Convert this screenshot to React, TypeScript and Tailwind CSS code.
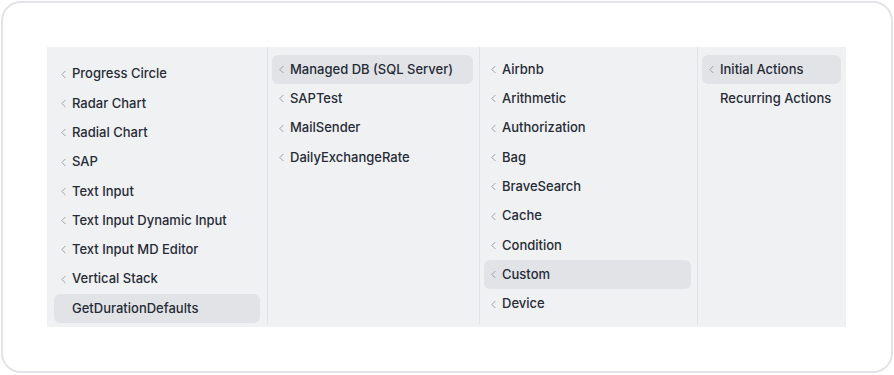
import { ChevronLeft } from "lucide-react";

type Item = { label: string; active?: boolean; chevron?: boolean };

const columns: { width: string; pad: string; items: Item[] }[] = [
  {
    width: "w-[221px]",
    pad: "pt-[12.5px] px-[7px]",
    items: [
      { label: "Progress Circle" },
      { label: "Radar Chart" },
      { label: "Radial Chart" },
      { label: "SAP" },
      { label: "Text Input" },
      { label: "Text Input Dynamic Input" },
      { label: "Text Input MD Editor" },
      { label: "Vertical Stack" },
      { label: "GetDurationDefaults", active: true, chevron: false },
    ],
  },
  {
    width: "w-[212px]",
    pad: "pt-[8px] pl-[4px] pr-[6px]",
    items: [
      { label: "Managed DB (SQL Server)", active: true },
      { label: "SAPTest" },
      { label: "MailSender" },
      { label: "DailyExchangeRate" },
    ],
  },
  {
    width: "w-[218px]",
    pad: "pt-[8px] pl-[4px] pr-[6px]",
    items: [
      { label: "Airbnb" },
      { label: "Arithmetic" },
      { label: "Authorization" },
      { label: "Bag" },
      { label: "BraveSearch" },
      { label: "Cache" },
      { label: "Condition" },
      { label: "Custom", active: true },
      { label: "Device" },
    ],
  },
  {
    width: "flex-1",
    pad: "pt-[8px] pl-[4px] pr-[5px]",
    items: [
      { label: "Initial Actions", active: true },
      { label: "Recurring Actions", chevron: false },
    ],
  },
];

function Row({ item }: { item: Item }) {
  const showChevron = item.chevron !== false;
  return (
    <div
      className={`flex h-[29.3px] items-center rounded-md pl-[3px] text-[13px] font-medium text-[#262b36] ${
        item.active ? "bg-[#e2e3e7]" : ""
      }`}
    >
      <span className="flex w-[15px] shrink-0 items-center">
        {showChevron && (
          <ChevronLeft className="h-[13px] w-[13px] text-[#979da7]" strokeWidth={1.8} />
        )}
      </span>
      <span className="whitespace-nowrap">{item.label}</span>
    </div>
  );
}

export default function App() {
  return (
    <div
      className="h-[375px] w-[894px] bg-white p-px"
      style={{ fontFamily: "Inter, 'Noto Sans', sans-serif" }}
    >
      <div className="h-[372px] w-[892px] rounded-[20px] border-2 border-[#e3e4e8] bg-white pl-[44px] pt-[44px]">
        <div className="flex h-[280px] w-[799px] bg-[#f0f1f3]">
          {columns.map((col, i) => (
            <div
              key={i}
              className={`${col.width} ${col.pad} flex flex-col ${
                i < columns.length - 1 ? "border-r border-[#e2e3e7]" : ""
              } mb-[3px]`}
            >
              {col.items.map((item) => (
                <Row key={item.label} item={item} />
              ))}
            </div>
          ))}
        </div>
      </div>
    </div>
  );
}
